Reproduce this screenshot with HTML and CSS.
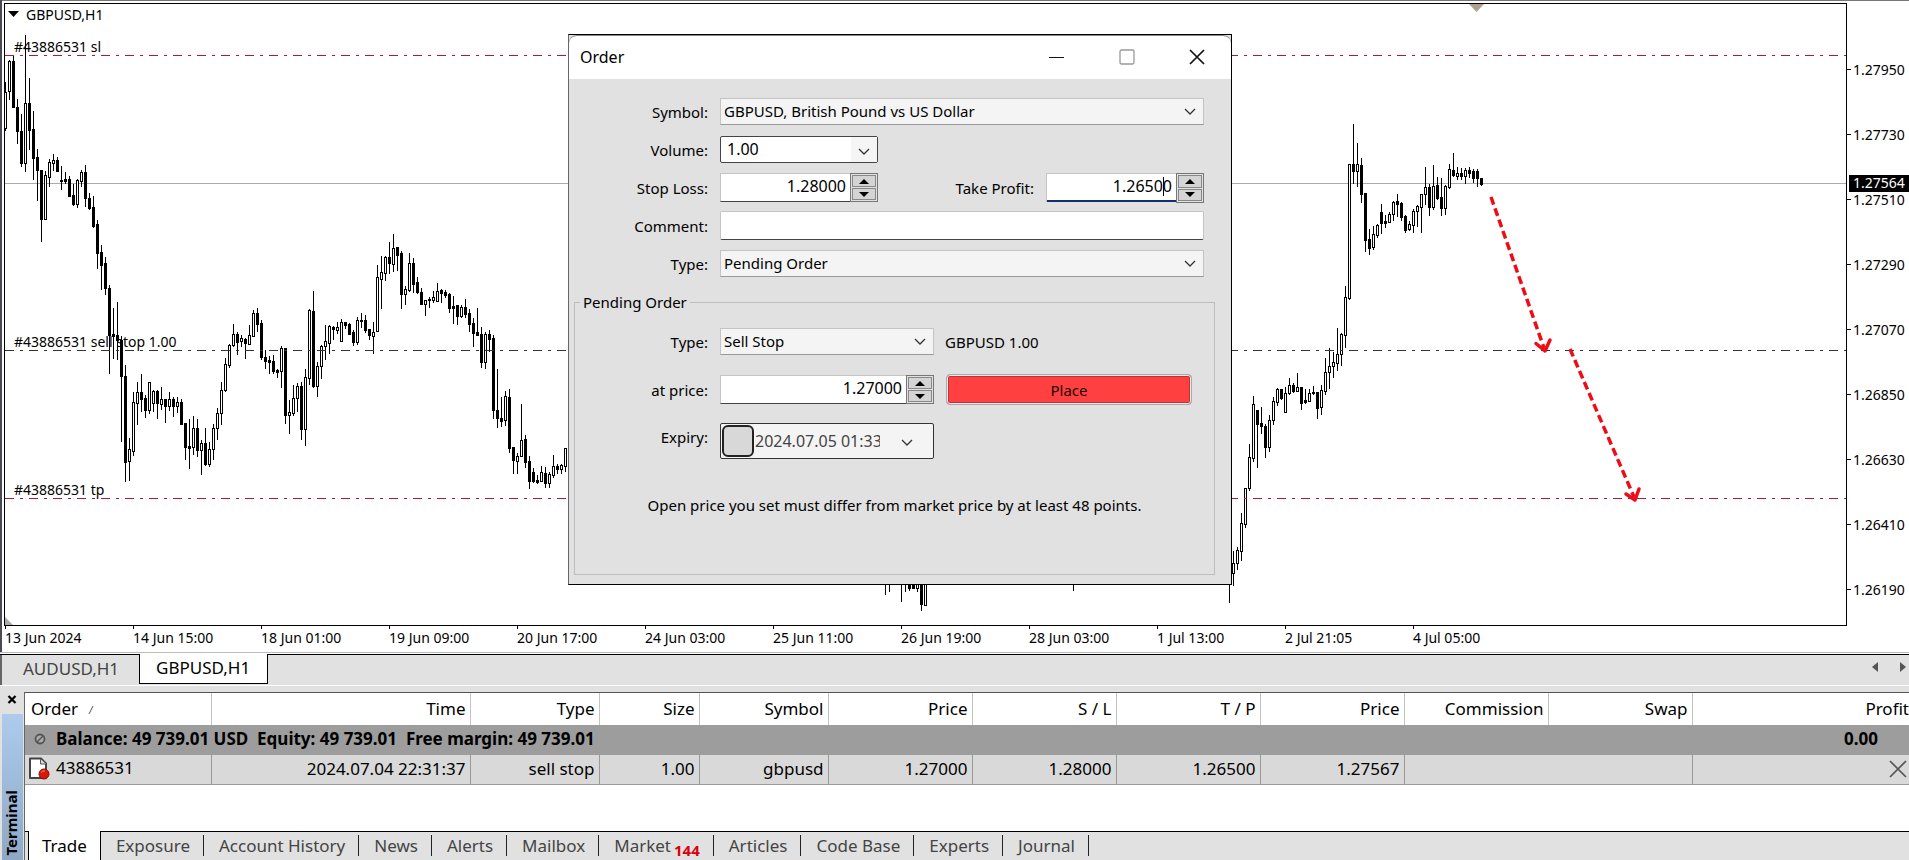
FILE: index.html
```html
<!DOCTYPE html>
<html lang="en">
<head>
<meta charset="utf-8">
<title>GBPUSD,H1</title>
<link rel="stylesheet" href="styles.css">
</head>
<body>
<main class="workspace">
  <section class="chart" aria-label="GBPUSD H1 chart">
    <svg class="plot" role="img" aria-label="Price candles">
      <g transform="translate(-5 -4)">
        <g class="crisp">
          <line class="bid-line" x1="5" y1="183.5" x2="101%" y2="183.5"/>
          <path class="wick" id="wicks"/>
          <path class="body-up" id="up"/>
          <path class="body-down" id="down"/>
          <line class="stop-line" x1="5" y1="55.5" x2="101%" y2="55.5"/>
          <line class="entry-line" x1="5" y1="350.5" x2="101%" y2="350.5"/>
          <line class="stop-line" x1="5" y1="498.5" x2="101%" y2="498.5"/>
        </g>
        <path d="M8 11h11l-5.500 6z"/>
        <path class="shift-mark" d="M1469 4h15l-7.500 8z"/>
        <path class="corner-mark" d="M5 617v8h8z"/>
        <text x="26" y="20">GBPUSD,H1</text>
        <text x="14" y="52">#43886531 sl</text>
        <text x="14" y="347">#43886531 sell stop 1.00</text>
        <text x="14" y="495">#43886531 tp</text>
        <g class="arrow">
          <path class="arrow-shaft" d="M1491 197L1544 348M1570 349L1634 497"/>
          <path d="M1536 343.500L1545 351L1550 340M1626 494L1635 500L1639 489"/>
        </g>
      </g>
    </svg>
    <svg class="price-axis" role="img" aria-label="Price scale">
      <g id="prices"></g>
      <rect x="2" y="175" width="100%" height="17"/>
      <text class="bid-text" x="6" y="188">1.27564</text>
    </svg>
    <ol class="time-axis">
      <li>13 Jun 2024</li><li>14 Jun 15:00</li><li>18 Jun 01:00</li><li>19 Jun 09:00</li><li>20 Jun 17:00</li><li>24 Jun 03:00</li><li>25 Jun 11:00</li><li>26 Jun 19:00</li><li>28 Jun 03:00</li><li>1 Jul 13:00</li><li>2 Jul 21:05</li><li>4 Jul 05:00</li>
    </ol>

    <form class="dialog" aria-label="Order">
      <header class="titlebar">
        <h1>Order</h1>
        <button type="button" aria-label="Minimize"><svg width="16" height="16"><path d="M0 8.500h15" stroke="#111"/></svg></button>
        <button type="button" aria-label="Maximize"><svg width="16" height="16"><rect x="1" y="1" width="14" height="14" rx="1.500" stroke="#999" stroke-width="1.300"/></svg></button>
        <button type="button" aria-label="Close"><svg width="16" height="16"><path d="M1 1l14 14M15 1L1 15" stroke="#111" stroke-width="1.700"/></svg></button>
      </header>
      <div class="fields">
        <label for="symbol">Symbol:</label>
        <div class="select wide"><select id="symbol"><option>GBPUSD, British Pound vs US Dollar</option></select><svg class="chevron" width="12" height="8"><path d="M1 1l5 5l5-5"/></svg></div>
        <label for="volume">Volume:</label>
        <div class="combo"><input id="volume" value="1.00"><button type="button" aria-label="Volume list"><svg class="chevron-inline" width="12" height="8"><path d="M1 1l5 5l5-5"/></svg></button></div>
        <label for="sl">Stop Loss:</label>
        <div class="spin"><input id="sl" value="1.28000"><span class="steps"><button type="button" aria-label="Increase stop loss"><svg width="10" height="5"><path d="M0 5l5-5l5 5z"/></svg></button><button type="button" aria-label="Decrease stop loss"><svg width="10" height="5"><path d="M0 0l5 5l5-5z"/></svg></button></span></div>
        <label class="second" for="tp">Take Profit:</label>
        <div class="spin focused"><input id="tp" value="1.26500"><i class="caret"></i><span class="steps"><button type="button" aria-label="Increase take profit"><svg width="10" height="5"><path d="M0 5l5-5l5 5z"/></svg></button><button type="button" aria-label="Decrease take profit"><svg width="10" height="5"><path d="M0 0l5 5l5-5z"/></svg></button></span></div>
        <label for="comment">Comment:</label>
        <input class="text wide" id="comment">
        <label for="type">Type:</label>
        <div class="select wide"><select id="type"><option>Pending Order</option></select><svg class="chevron" width="12" height="8"><path d="M1 1l5 5l5-5"/></svg></div>
      </div>
      <fieldset>
        <legend>Pending Order</legend>
        <div class="pending">
          <label for="ptype">Type:</label>
          <div class="select"><select id="ptype"><option>Sell Stop</option></select><svg class="chevron" width="12" height="8"><path d="M1 1l5 5l5-5"/></svg></div>
          <span class="summary">GBPUSD 1.00</span>
          <label for="price">at price:</label>
          <div class="spin"><input id="price" value="1.27000"><span class="steps"><button type="button" aria-label="Increase price"><svg width="10" height="5"><path d="M0 5l5-5l5 5z"/></svg></button><button type="button" aria-label="Decrease price"><svg width="10" height="5"><path d="M0 0l5 5l5-5z"/></svg></button></span></div>
          <button class="place" type="button">Place</button>
          <label class="expiry-label" for="expiry">Expiry:</label>
          <div class="expiry"><input type="checkbox" aria-label="Use expiry"><input id="expiry" value="2024.07.05 01:33"><button type="button" aria-label="Pick date"><svg class="chevron-inline" width="12" height="8"><path d="M1 1l5 5l5-5"/></svg></button></div>
        </div>
        <p class="hint">Open price you set must differ from market price by at least 48 points.</p>
      </fieldset>
    </form>
  </section>

  <nav class="chart-tabs" aria-label="Charts">
    <button type="button">AUDUSD,H1</button>
    <button type="button" class="active">GBPUSD,H1</button>
    <span class="scrollers">
      <button type="button" aria-label="Scroll left"><svg width="6" height="10"><path d="M6 0v10L0 5z"/></svg></button>
      <button type="button" aria-label="Scroll right"><svg width="6" height="10"><path d="M0 0v10l6-5z"/></svg></button>
    </span>
  </nav>

  <section class="terminal" aria-label="Terminal">
    <aside class="grip">
      <button type="button" aria-label="Close terminal"><svg width="10" height="9"><path d="M1.500 1l7 7M8.500 1l-7 7" stroke="#000" stroke-width="2.200"/></svg></button>
      <div class="grip-bar"><span>Terminal</span></div>
    </aside>
    <div class="panel">
      <table>
        <colgroup><col class="c-order"><col class="c-time"><col class="c-type"><col class="c-size"><col class="c-type"><col class="c-num"><col class="c-num"><col class="c-num"><col class="c-num"><col class="c-num"><col class="c-num"><col></colgroup>
        <thead>
          <tr><th>Order <svg width="8" height="10"><path d="M1 9L5 1" stroke="#555"/></svg></th><th>Time</th><th>Type</th><th>Size</th><th>Symbol</th><th>Price</th><th>S / L</th><th>T / P</th><th>Price</th><th>Commission</th><th>Swap</th><th>Profit</th></tr>
        </thead>
        <tbody>
          <tr class="balance">
            <td colspan="11"><svg width="12" height="12"><circle cx="6" cy="6" r="4.500" fill="#aaa" stroke="#555" stroke-width="1.800"/><path d="M3 9l6-6" stroke="#555" stroke-width="1.500"/></svg>Balance: 49 739.01 USD&nbsp; Equity: 49 739.01&nbsp; Free margin: 49 739.01</td>
            <td>0.00</td>
          </tr>
          <tr class="order">
            <td><svg width="22" height="24"><path d="M2 1.500h11l5 5V21H2z" fill="#fff" stroke="#444" stroke-width="2" stroke-linejoin="round"/><path d="M12.500 2v5H18" fill="#ddd" stroke="#555"/><circle cx="16" cy="17" r="5" fill="#d81808" stroke="#8a1008"/><path d="M13 15.500a3.500 3.500 0 0 1 4-1.500" stroke="#ff9080" fill="none"/></svg>43886531</td>
            <td>2024.07.04 22:31:37</td><td>sell stop</td><td>1.00</td><td>gbpusd</td><td>1.27000</td><td>1.28000</td><td>1.26500</td><td>1.27567</td><td colspan="2"></td>
            <td><button type="button" aria-label="Delete order"><svg width="18" height="18"><path d="M1 1l16 16M17 1L1 17" stroke="#555" stroke-width="1.700"/></svg></button></td>
          </tr>
        </tbody>
      </table>
      <nav class="tabs" aria-label="Terminal pages">
        <button type="button" class="active">Trade</button><button type="button">Exposure</button><button type="button">Account History</button><button type="button">News</button><button type="button">Alerts</button><button type="button">Mailbox</button><button type="button">Market<b>144</b></button><button type="button">Articles</button><button type="button">Code Base</button><button type="button">Experts</button><button type="button">Journal</button>
      </nav>
    </div>
  </section>
</main>
<script src="chart.js"></script>
</body>
</html>
```
FILE: styles.css
```css
* { box-sizing: border-box; }

body {
  margin: 0;
  background: #fff;
  color: #000;
  font: 17px/22px "Noto Sans", "Open Sans", sans-serif;
}

button, input, select { font: inherit; color: inherit; margin: 0; padding: 0; border: 0; border-radius: 0; background: none; }
svg { fill: none; }

.workspace { display: flex; flex-direction: column; height: 100vh; min-height: 760px; overflow: hidden; }

/* Chart */
.chart {
  position: relative;
  flex: none;
  display: grid;
  grid-template-columns: minmax(0, 1fr) 62px;
  border-bottom: 1px solid #bbb;
  box-shadow: inset 2px 0 #4a4a50, inset 0 1px #777;
  font-size: 14px;
  line-height: 18px;
}
.plot { display: block; width: calc(100% - 4px); height: 623px; margin: 3px 0 0 4px; border: 1px solid #000; overflow: hidden; }
.plot path, .price-axis rect { fill: #000; }
.plot text, .price-axis text { fill: #000; }
.crisp { shape-rendering: crispEdges; }
.bid-line { stroke: #aaa; }
.stop-line { stroke: #b0183a; stroke-dasharray: 9 6 3 6; }
.entry-line { stroke: #333; stroke-dasharray: 9 6 3 6; }
.plot .body-up { fill: #fff; stroke: #000; }
.plot .shift-mark { fill: #b0a090; }
.plot .corner-mark { fill: #aaa; }
.plot .arrow path { fill: none; stroke: #ee0c16; stroke-width: 3.5; stroke-linecap: round; stroke-linejoin: round; }
.plot .arrow .arrow-shaft { stroke-dasharray: 8 4; stroke-linecap: butt; }
.price-axis { display: block; width: 100%; height: 626px; }
.price-axis line { stroke: #000; }
.price-axis .bid-text { fill: #fff; }

.time-axis { grid-column: 1 / -1; display: flex; height: 26px; margin: 0; padding: 0 0 0 5px; list-style: none; overflow: hidden; }
.time-axis li { flex: 0 0 128px; white-space: nowrap; }
.time-axis li::before { content: ""; display: block; width: 1px; height: 3px; background: #000; }

/* Order dialog */
.dialog {
  position: absolute;
  top: 34px;
  left: 568px;
  width: 664px;
  border: 1px solid #000;
  border-left-color: #666;
  background: #e1e1e1;
  font-size: 15px;
  line-height: 20px;
}
.titlebar { display: flex; align-items: center; gap: 54px; height: 44px; padding: 0 26px 2px 11px; background: #fff; border-top: 1px solid #888; border-radius: 8px 8px 0 0; }
.titlebar h1 { flex: 1; margin: 0; font-size: 16px; font-weight: 400; }
.titlebar button { display: flex; }
.fields, .pending { display: grid; align-items: center; justify-content: start; }
.fields { grid-template-columns: 139px 170px 156px 170px; grid-auto-rows: 29px; row-gap: 9px; padding-top: 18px; }
.fields label, .pending label { grid-column: 1; text-align: right; }
.fields > :not(label), .pending > .select, .pending > .spin, .pending > .expiry { margin-left: 12px; }
.fields .second { grid-column: 3; }
.wide { grid-column: 2 / 5; }

.select { position: relative; height: 27px; }
.select select { appearance: none; display: block; width: 100%; height: 100%; padding: 0 24px 2px 3px; background: #f4f4f4; border: 1px solid #c4c4c4; border-bottom-color: #999; }
.chevron { position: absolute; right: 8px; top: 10px; pointer-events: none; }
.chevron path, .chevron-inline path { stroke: #333; stroke-width: 1.300; }
.combo { display: flex; height: 27px; border: 1px solid #444; border-radius: 2px; background: #fff; }
.combo input, .spin input { font-size: 16px; }
.combo input { flex: 1; min-width: 0; padding: 0 0 2px 6px; }
.combo button { width: 26px; background: #f5f5f5; }
.text { height: 29px; background: #fff; border: 1px solid #c4c4c4; border-bottom-color: #444; border-radius: 2px; }
.spin { position: relative; display: flex; height: 29px; background: #fff; border: 1px solid #c4c4c4; border-bottom-color: #444; }
.spin input { flex: 1; min-width: 0; padding: 0 5px 3px 0; text-align: right; }
.focused { border-bottom: 0; }
.focused input { border-bottom: 2px solid #12306c; padding-bottom: 2px; }
.caret { position: absolute; right: 39px; top: 3px; width: 1px; height: 19px; background: #000; }
.steps { display: flex; flex-direction: column; gap: 1px; width: 28px; margin: -1px; padding: 1px; background: #e1e1e1; border: 1px solid #777; }
.steps button { flex: 1; display: flex; align-items: center; justify-content: center; background: #d4d4d4; border: 1px solid #888; }
.steps path { fill: #000; }

fieldset { margin: 14px 16px 9px 5px; padding: 0 0 59px; border: 1px solid #bdbdbd; min-width: 0; }
legend { margin-left: 5px; padding: 0 3px; }
.pending { grid-template-columns: 133px 226px 246px; grid-template-rows: 31px 31px 38px; row-gap: 17px; padding-top: 14px; }
.summary { padding-left: 11px; }
.place { height: 31px; margin-left: 12px; margin-right: -12px; background: #ff4040; border: 1px solid #aaa; border-radius: 4px; box-shadow: inset 0 0 0 1px #eee, inset 0 0 0 2px #c03038; color: #200; }
.expiry-label { align-self: start; padding-top: 5px; }
.expiry { display: flex; align-items: center; height: 36px; padding: 0 20px 0 1px; background: #f4f4f4; border: 1px solid #333; border-radius: 2px; color: #444; }
.expiry input[type="checkbox"] { appearance: none; flex: none; width: 32px; height: 32px; background: #d8d8d8; border: 2px solid #222; border-radius: 6px; }
.expiry input:not([type]) { flex: none; width: 126px; padding-left: 1px; font-size: 16px; }
.expiry button { margin-left: auto; }
.hint { margin: 35px 0 0; text-align: center; white-space: nowrap; }

/* Chart tabs */
.chart-tabs { flex: none; display: flex; align-items: stretch; height: 32px; margin-top: 1px; border-top: 1px solid #000; border-bottom: 1px solid #fff; background: #e1e1e1; box-shadow: inset 2px 0 #666; }
.chart-tabs > button { height: 29px; padding: 0 20px 2px 23px; color: #444; }
.chart-tabs > .active { margin-top: -1px; height: 30px; padding: 0 17px 1px 16px; background: #fff; border: 1px solid #000; border-top: 0; color: #000; }
.scrollers { display: flex; align-items: center; gap: 22px; margin-left: auto; padding: 0 3px 6px 0; }
.scrollers button { display: flex; }
.scrollers path { fill: #555; }

/* Terminal */
.terminal { flex: 1; display: flex; min-height: 0; padding-top: 6px; background: #e1e1e1; }
.grip { flex: none; display: flex; flex-direction: column; align-items: center; width: 24px; }
.grip > button { display: flex; padding: 3px 0 10px; }
.grip-bar { flex: 1; display: flex; align-items: center; justify-content: flex-end; flex-direction: column; width: 21px; padding: 0 3px 4px 0; background: linear-gradient(#aecbed, #8ea8c4); }
.grip-bar span { writing-mode: vertical-rl; rotate: 180deg; font-size: 15px; line-height: 20px; font-weight: 700; }
.panel { flex: 1; display: flex; flex-direction: column; min-width: 0; background: #fff; border-top: 1px solid #555; border-left: 1px solid #666; }
table { table-layout: fixed; width: 100%; border-collapse: collapse; }
.c-order { width: 186px; }
.c-time { width: 259px; }
.c-type { width: 129px; }
.c-size { width: 100px; }
.c-num { width: 144px; }
th, td { padding: 0 4px; text-align: right; font-weight: 400; white-space: nowrap; }
th { height: 32px; border-right: 1px solid #c4c4c4; }
th:first-child, td:first-child { text-align: left; padding-left: 6px; }
th:first-child svg { margin-left: 6px; }
th:last-child { padding-right: 0; border-right: 0; }
td svg { vertical-align: middle; }
.balance { height: 30px; background: #9d9d9d; }
.balance td { padding-bottom: 2px; font-weight: 700; }
.balance td:first-child { padding-left: 9px; }
.balance svg { margin: 0 10px 2px 0; }
.balance td:last-child { padding-right: 31px; }
.order { height: 29px; background: #d9d9d9; border-bottom: 1px solid #999; }
.order td { border-right: 1px solid #999; }
.order td:first-child { padding-left: 3px; }
.order td:first-child svg { margin: 0 6px 0 0; }
.order td:last-child { padding-right: 2px; border-right: 0; }
.order button { display: block; margin-left: auto; line-height: 0; }

.tabs { display: flex; height: 29px; margin-top: auto; padding-left: 3px; }
.tabs::before { content: ""; width: 3px; margin-left: -3px; background: #e1e1e1; border-top: 1px solid #000; }
.tabs::after { content: ""; flex: 1; background: #e1e1e1; border-top: 1px solid #000; }
.tabs button { position: relative; padding: 0 14px 1px 15px; background: #e1e1e1; border-top: 1px solid #000; color: #444; }
.tabs button::after { content: ""; position: absolute; right: 0; top: 3px; width: 1px; height: 21px; background: #222; }
.tabs .active { padding: 0 13px; background: #fff; border: 1px solid #000; border-top: 0; border-bottom: 0; color: #000; }
.tabs .active::after { display: none; }
.tabs b { position: relative; top: 4px; margin-left: 3px; color: #d8000c; font-size: 15px; }
```
FILE: chart.js
```js
// Candle runs: starting x, then "<u|d>high,top,bottom,low" for each bar, 4px apart.
const runs = {
  5: "u82,92,128,130 u60,61,91,99 d55,61,107,107 d99,107,131,143 d114,131,163,166 u35,103,163,171 d78,103,130,149 d111,129,158,179 d149,157,170,200 d170,170,219,241 u171,175,219,219 u159,162,177,186 u154,160,163,170 d157,160,171,171 d166,180,181,189 d172,179,181,183 d176,179,196,196 d184,195,204,205 u179,180,204,207 u170,172,181,186 d165,172,198,206 d193,198,208,209 d196,207,226,227 d220,224,253,268 d245,252,265,289 d257,263,288,294 d285,288,335,373 d308,334,336,358 d302,335,340,359 d336,340,376,441 d365,376,462,481 u438,449,461,480 u392,402,451,455 u382,392,403,424 d374,392,399,411 d395,398,410,417 u382,382,410,413 u390,391,403,411 d390,391,403,418 u387,399,404,409 d399,399,406,422 u392,399,406,410 d397,399,406,416 u397,402,406,412 d399,402,424,424 d423,423,447,459 d419,446,448,468 u416,428,447,454 d419,428,450,456 u440,443,450,474 d428,443,464,465 u442,449,464,466 u424,428,449,459 u408,413,428,439 u382,390,413,424 u358,364,390,391 u344,345,365,367 u324,334,345,346 d332,334,342,354 u335,338,341,346 d338,339,343,358 u325,335,344,344 u310,313,336,336 d308,313,324,331 d320,323,357,359 d350,357,361,368 d356,360,362,373 d355,361,371,373 d369,370,372,377 u346,348,371,387 d348,348,415,423 u400,412,415,433 u385,398,413,415 u383,386,398,411 d382,386,429,439 u369,377,429,445 u309,310,378,384 d291,311,386,387 u362,366,386,396 u345,346,366,378 u325,341,346,359 u325,326,343,353 d326,327,329,339 u322,327,330,333 u319,322,341,341 d322,322,325,328 d323,324,334,334 d330,332,342,345 u317,320,342,344 d313,320,321,327 d315,320,330,332 d329,329,335,339 u322,332,336,353 u265,277,331,331 u256,272,279,308 u256,257,273,280 d242,257,263,273 u234,248,264,271 d247,247,255,270 d251,253,294,308 u286,289,294,304 u253,263,290,291 d258,263,284,292 d277,282,292,293 d288,292,304,304 u300,300,304,315 d297,299,300,307 u291,297,300,302 u283,291,301,301 d289,290,293,302 d290,292,295,297 d293,294,308,312 d296,306,308,323 d305,305,316,324 u305,307,316,317 d299,307,314,317 d309,313,324,331 d318,323,333,346 d308,332,335,335 d327,334,362,367 u332,334,362,368 d330,334,339,351 d335,338,410,418 d369,410,418,427 d397,418,421,426 u391,396,420,425 d389,397,448,452 d447,447,460,473 u453,456,461,473 u404,440,456,456 d435,439,462,467 d456,461,481,488 d468,472,481,482 d475,480,482,483 u466,472,481,481 d467,473,483,487 u472,474,483,487 u455,466,475,477 d464,466,469,473 u464,465,469,473 u448,448,466,471",
  885: "u560,565,580,594 d560,565,580,591",
  901: "u560,565,580,601 d560,565,580,591 d570,575,588,590 d570,575,588,588 u570,575,588,591 d580,580,604,610 u580,580,605,605",
  1073: "d560,565,580,590",
  1229: "d560,565,580,602 u551,563,573,585 u547,550,563,569 u513,523,551,560 u488,488,524,527 u444,457,488,490 u396,404,458,461 d410,410,424,467 d407,423,426,433 d424,426,447,457 u415,420,447,451 u397,401,420,424 u388,389,402,405 d389,389,398,399 u387,393,412,412 u378,385,393,394 d383,385,391,392 u373,387,391,391 d387,387,403,409 d389,400,402,403 u389,393,401,401 d386,392,393,394 d392,392,408,418 u385,390,407,414 u358,372,391,394 u348,366,372,388 u352,362,366,377 u328,354,363,370 u333,334,354,365 u286,297,335,347 u164,164,298,299 d124,164,171,183 u143,164,171,186 d158,165,194,202 d193,193,240,251 d229,239,248,254 u226,234,247,249 u224,225,235,237 d204,212,223,233 d215,221,223,227 u212,214,222,222 u201,202,214,220 d194,201,204,216 d202,203,217,220 d215,216,230,232 u221,224,229,230 u209,211,225,232 u205,206,211,226 u194,194,207,232 u167,187,194,204 d184,187,207,215 u165,186,207,209 d177,185,198,199 d178,197,208,215 u185,186,208,214 u164,169,187,188 d153,170,175,176 u167,173,176,179 d168,173,176,179 u168,170,176,183 d167,170,173,177 d169,171,178,182 d169,171,178,186 d178,178,184,185"
};

let wicks = "", up = "", down = "";
for (const [start, run] of Object.entries(runs)) {
  run.split(" ").forEach((bar, i) => {
    const x = Number(start) + i * 4;
    const [high, top, bottom, low] = bar.slice(1).split(",").map(Number);
    wicks += `M${x} ${high}h1V${low + 1}h-1z`;
    if (bar[0] === "u") up += `M${x - 0.5} ${top + 0.5}h2V${bottom + 0.5}h-2z`;
    else down += `M${x - 1} ${top}h3V${bottom + 1}h-3z`;
  });
}
document.getElementById("wicks").setAttribute("d", wicks);
document.getElementById("up").setAttribute("d", up);
document.getElementById("down").setAttribute("d", down);

const labels = ["1.27950", "1.27730", "1.27510", "1.27290", "1.27070", "1.26850", "1.26630", "1.26410", "1.26190"];
document.getElementById("prices").innerHTML = labels.map((label, i) => {
  const y = 70 + i * 65;
  return `<line x1="0" x2="4" y1="${y - 0.5}" y2="${y - 0.5}"/><text x="6" y="${y + 5}">${label}</text>`;
}).join("");
```
